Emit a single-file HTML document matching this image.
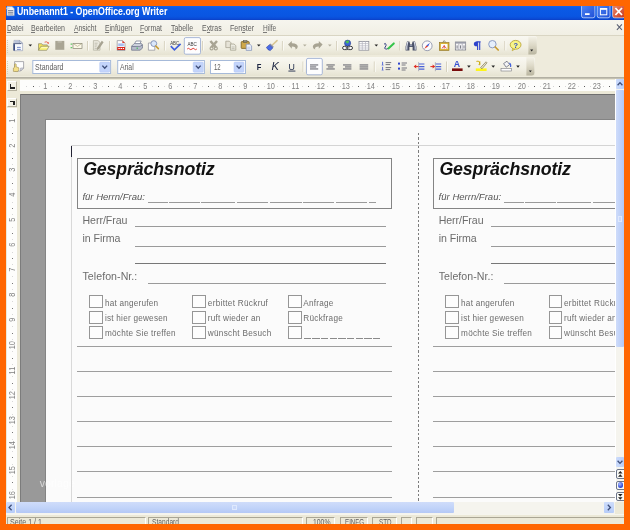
<!DOCTYPE html>
<html lang="de"><head><meta charset="utf-8"><title>Unbenannt1 - OpenOffice.org Writer</title><style>
html,body{margin:0;padding:0;}
body{width:630px;height:530px;background:#ff6600;position:relative;overflow:hidden;font-family:"Liberation Sans",sans-serif;}
div,span.t,svg{position:absolute;}
span.t{white-space:pre;line-height:1;}
span.t u{text-decoration-thickness:0.7px;text-underline-offset:0.6px;}
#win{left:6px;top:6px;width:618px;height:518px;background:#ece9d8;overflow:hidden;}
.L{left:0;top:0;width:630px;height:530px;}
</style></head><body>
<div class="L" style="will-change:transform;"><div style="left:6px;top:6px;width:618px;height:14px;background:linear-gradient(#1563ea 0%,#0a5ae6 14%,#0956e2 72%,#0a4dd8 88%,#0b3fc6 100%);"></div><span class="t" style="left:17.00px;top:6.87px;font-size:10.20px;color:#fff;font-weight:bold;transform-origin:0 0;transform:scaleX(0.8631);">Unbenannt1 - OpenOffice.org Writer</span><div style="left:6px;top:20px;width:618px;height:15px;background:linear-gradient(#f6f5ee,#f1efe4);"></div><div style="left:6px;top:35px;width:618px;height:1px;background:#d9d5c3;"></div><span class="t" style="left:6.50px;top:23.87px;font-size:8.30px;color:#5e5e5e;transform-origin:0 0;transform:scaleX(0.8516);">Datei</span><span class="t" style="left:31.00px;top:23.87px;font-size:8.30px;color:#5e5e5e;transform-origin:0 0;transform:scaleX(0.8471);">Bearbeiten</span><span class="t" style="left:73.60px;top:23.87px;font-size:8.30px;color:#5e5e5e;transform-origin:0 0;transform:scaleX(0.8230);">Ansicht</span><span class="t" style="left:104.80px;top:23.87px;font-size:8.30px;color:#5e5e5e;transform-origin:0 0;transform:scaleX(0.8301);">Einfügen</span><span class="t" style="left:140.00px;top:23.87px;font-size:8.30px;color:#5e5e5e;transform-origin:0 0;transform:scaleX(0.8371);">Format</span><span class="t" style="left:171.00px;top:23.87px;font-size:8.30px;color:#5e5e5e;transform-origin:0 0;transform:scaleX(0.8366);">Tabelle</span><span class="t" style="left:202.00px;top:23.87px;font-size:8.30px;color:#5e5e5e;transform-origin:0 0;transform:scaleX(0.8377);">Extras</span><span class="t" style="left:229.80px;top:23.87px;font-size:8.30px;color:#5e5e5e;transform-origin:0 0;transform:scaleX(0.8600);">Fenster</span><span class="t" style="left:262.80px;top:23.87px;font-size:8.30px;color:#5e5e5e;transform-origin:0 0;transform:scaleX(0.7947);">Hilfe</span><div style="left:6px;top:36px;width:618px;height:42px;background:#eeebdc;"></div><div style="left:6px;top:36px;width:531px;height:18.5px;background:linear-gradient(#f9f8f2,#f1efe3 60%,#e6e3d2);border-radius:0 2.5px 2.5px 0;"></div><div style="left:6px;top:56.5px;width:528.5px;height:19px;background:linear-gradient(#f9f8f2,#f1efe3 60%,#e6e3d2);border-radius:0 2.5px 2.5px 0;"></div><div style="left:6px;top:76.5px;width:618px;height:1.5px;background:linear-gradient(#cfccbc,#96948a);"></div><div style="left:6px;top:78px;width:618px;height:1px;background:#c4c1b2;"></div><div style="left:6.50px;top:32.00px;width:4.81px;height:1px;background:#5e5e5e;opacity:.8"></div><div style="left:31.00px;top:32.00px;width:4.40px;height:1px;background:#5e5e5e;opacity:.8"></div><div style="left:73.59px;top:32.00px;width:4.27px;height:1px;background:#5e5e5e;opacity:.8"></div><div style="left:104.80px;top:32.00px;width:4.30px;height:1px;background:#5e5e5e;opacity:.8"></div><div style="left:140.00px;top:32.00px;width:3.95px;height:1px;background:#5e5e5e;opacity:.8"></div><div style="left:171.00px;top:32.00px;width:3.18px;height:1px;background:#5e5e5e;opacity:.8"></div><div style="left:206.63px;top:32.00px;width:3.18px;height:1px;background:#5e5e5e;opacity:.8"></div><div style="left:242.08px;top:32.00px;width:3.29px;height:1px;background:#5e5e5e;opacity:.8"></div><div style="left:262.80px;top:32.00px;width:4.47px;height:1px;background:#5e5e5e;opacity:.8"></div><svg class="L" style="left:0;top:0" width="630" height="530" viewBox="0 0 630 530"><rect x="7" y="40" width="1" height="1" fill="#d2cebc"/><rect x="7" y="42" width="1" height="1" fill="#d2cebc"/><rect x="7" y="44" width="1" height="1" fill="#d2cebc"/><rect x="7" y="46" width="1" height="1" fill="#d2cebc"/><rect x="7" y="48" width="1" height="1" fill="#d2cebc"/><rect x="7" y="50" width="1" height="1" fill="#d2cebc"/><rect x="7" y="52" width="1" height="1" fill="#d2cebc"/><rect x="7" y="61" width="1" height="1" fill="#d2cebc"/><rect x="7" y="63" width="1" height="1" fill="#d2cebc"/><rect x="7" y="65" width="1" height="1" fill="#d2cebc"/><rect x="7" y="67" width="1" height="1" fill="#d2cebc"/><rect x="7" y="69" width="1" height="1" fill="#d2cebc"/><rect x="7" y="71" width="1" height="1" fill="#d2cebc"/><rect x="7" y="73" width="1" height="1" fill="#d2cebc"/><path d="M14 40.4 h5.4 l3.2 2.8 v7.5 h-8.6z" fill="#f7f9fd" stroke="#8f98b3" stroke-width="0.6"/><path d="M14.3 40.7 h5 l2.6 2.4 h-7.6z" fill="#b9c2d8"/><path d="M19.4 40.4 v2.8 h3.2z" fill="#dfe4ef" stroke="#7f89a6" stroke-width="0.5"/><rect x="13.3" y="43.1" width="8" height="1" fill="#5b6788"/><rect x="13.3" y="44.1" width="1.7" height="6.5" fill="#3d4d80"/><path d="M17 47.4h3.8M17 49.4h3.8" stroke="#6b82c4" stroke-width="0.9"/><path d="M28.5 44.4 h3.6 l-1.8 2.2z" fill="#222"/><path d="M38.5 50.3 v-6.6 h3.2 l1 1.2 h4.6 v1.4" fill="#f2e45e" stroke="#7d7a5c" stroke-width="0.6"/><path d="M38.5 50.3 l2.4 -4 h8.2 l-2.4 4z" fill="#fbf47e" stroke="#7d7a5c" stroke-width="0.6"/><path d="M41.4 47.4 h6.4" stroke="#fffde0" stroke-width="0.7"/><path d="M44.6 42.2 q2 -1 3.4 0.5" fill="none" stroke="#e8452e" stroke-width="0.8"/><path d="M47.2 43.5 l1.8 0.2 l-0.3 -1.8z" fill="#e8452e"/><rect x="55.3" y="40.9" width="9" height="8.9" fill="#a9a594"/><rect x="57.6" y="41.4" width="4.2" height="1" fill="#c9c6b8"/><rect x="73" y="43.3" width="9" height="5.3" fill="#fcf9e8" stroke="#74715f" stroke-width="0.6"/><path d="M73.3 43.6 l4.2 2.8 l4.2 -2.8" fill="none" stroke="#a59f78" stroke-width="0.6"/><rect x="70.6" y="43.6" width="1.6" height="1" fill="#3fc24a"/><rect x="70.6" y="47.2" width="1.6" height="1" fill="#3fc24a"/><rect x="87" y="41" width="1" height="9.5" fill="#d6d1be"/><rect x="88" y="41" width="1" height="9.5" fill="#fbfaf5"/><path d="M93.4 40.6 h4.6 l2 1.8 v7.8 h-6.6z" fill="#eae8de" stroke="#b3b0a0" stroke-width="0.7"/><path d="M94.6 43.2h3M94.6 45h2.6M94.6 46.8h2M94.6 48.6h3.4" stroke="#b3b0a0" stroke-width="0.7"/><path d="M103.6 42.2 l-1.8 -1.4 l-4.6 6.6 l-0.4 2.8 l2.4 -1.4z" fill="#a7a392"/><rect x="109" y="41" width="1" height="9.5" fill="#d6d1be"/><rect x="110" y="41" width="1" height="9.5" fill="#fbfaf5"/><path d="M117.2 40.6 h5.2 l2.6 2.5 v7.4 h-7.8z" fill="#fdfdfd" stroke="#8d8d94" stroke-width="0.7"/><path d="M122.4 40.6 l2.6 2.5 h-2.6z" fill="#e23a2a"/><rect x="118.2" y="43.4" width="5.6" height="2.8" fill="#a9bcee"/><rect x="117.2" y="47" width="7.8" height="3" fill="#d8281f"/><path d="M118.4 48.5h1.4M120.6 48.5h1.4M122.8 48.5h1.2" stroke="#fff" stroke-width="1.1"/><path d="M134.4 44 l1.6 -3 h5.2 l-1.4 3z" fill="#fff" stroke="#6a7188" stroke-width="0.7"/><path d="M131.6 46.2 l2.6 -2.6 h7.4 l0.8 1.6 l-2.6 2.4z" fill="#d3d7e2" stroke="#70778e" stroke-width="0.7"/><path d="M131.6 46.4 h8.4 l2.4 -1.6 v3.4 l-2.4 2 h-8.4z" fill="#b7bccc" stroke="#666d84" stroke-width="0.7"/><rect x="136.6" y="47.6" width="1.2" height="1.2" fill="#2fbf45"/><path d="M148.4 43 h4.2 l2.2 2 v5.2 h-6.4z" fill="#fdfdfd" stroke="#8d8d94" stroke-width="0.7"/><circle cx="153.8" cy="43.6" r="2.9" fill="#dbe8fb" stroke="#7d8db5" stroke-width="0.9"/><path d="M155.8 46 l2.6 2.6" stroke="#c89a2e" stroke-width="1.5" stroke-linecap="round"/><rect x="163.9" y="41" width="1" height="9.5" fill="#d6d1be"/><rect x="164.9" y="41" width="1" height="9.5" fill="#fbfaf5"/><text x="170.2" y="44.6" font-size="4.8" fill="#3a3a3a" font-family="Liberation Sans, sans-serif" textLength="9" lengthAdjust="spacingAndGlyphs">ABC</text><path d="M170.8 46.2 l3.6 3.6 l6.2 -6" fill="none" stroke="#4060dc" stroke-width="1.7"/><rect x="184.3" y="37.6" width="16.2" height="16.6" rx="1.5" fill="#fdfdfe" stroke="#9fb0d4" stroke-width="0.9"/><text x="187.4" y="46.4" font-size="4.8" fill="#3a3a3a" font-family="Liberation Sans, sans-serif" textLength="9.4" lengthAdjust="spacingAndGlyphs">ABC</text><path d="M187.2 49 q1.2 -1.4 2.4 0 t2.4 0 t2.4 0 t2.4 0" fill="none" stroke="#e02a20" stroke-width="0.9"/><rect x="202.1" y="41" width="1" height="9.5" fill="#d6d1be"/><rect x="203.1" y="41" width="1" height="9.5" fill="#fbfaf5"/><path d="M210.4 41 l5.6 6.4 M217 41 l-5.6 6.4" stroke="#a8a493" stroke-width="2.5"/><circle cx="211.6" cy="48.4" r="1.5" fill="none" stroke="#a8a493" stroke-width="1.2"/><circle cx="215.8" cy="48.4" r="1.5" fill="none" stroke="#a8a493" stroke-width="1.2"/><path d="M225.8 41.2 h3.6 l1.6 1.6 v4.8 h-5.2z" fill="#e6e3d7" stroke="#a8a493" stroke-width="0.8"/><path d="M230.4 44 h3.6 l1.8 1.6 v4.6 h-5.4z" fill="#ecebe2" stroke="#a8a493" stroke-width="0.8"/><path d="M231.6 47h3M231.6 48.6h3" stroke="#a8a493" stroke-width="0.6"/><rect x="241.2" y="41.6" width="8" height="6.8" rx="0.6" fill="#cfa84a" stroke="#7a5f22" stroke-width="0.8"/><rect x="243.4" y="40.6" width="3.6" height="1.8" fill="#8f8a7a" stroke="#55513f" stroke-width="0.5"/><path d="M246.2 44.2 h3.6 l1.8 1.6 v4.6 h-5.4z" fill="#eef2fb" stroke="#7d8db5" stroke-width="0.7"/><path d="M247.2 47.2h3.2M247.2 48.8h3.2" stroke="#9fb0d8" stroke-width="0.6"/><path d="M257 44.4 h3.6 l-1.8 2.2z" fill="#222"/><path d="M272.4 45 l4.6 -4.4" stroke="#d9c692" stroke-width="1.6" stroke-linecap="round"/><path d="M270.4 43.6 l3.4 3.2 l-1 1.2 l-3.4 -3.2z" fill="#8a8fa6"/><path d="M269.4 44.8 l3.4 3.2 l-2.6 2.6 q-2.6 -0.6 -3.8 -3.2z" fill="#4a6ce6" stroke="#2c3fa6" stroke-width="0.6"/><rect x="281.9" y="41" width="1" height="9.5" fill="#d6d1be"/><rect x="282.9" y="41" width="1" height="9.5" fill="#fbfaf5"/><path d="M288 44.4 l3.8 -3.4 v2.2 q5.6 -0.2 6 3.6 q-0.2 2 -2.4 2.8 q1 -3 -3.6 -3 v2.2z" fill="#a8a493"/><path d="M303 44.4 h3.6 l-1.8 2.2z" fill="#b3af9e"/><path d="M322.6 44.4 l-3.8 -3.4 v2.2 q-5.6 -0.2 -6 3.6 q0.2 2 2.4 2.8 q-1 -3 3.6 -3 v2.2z" fill="#a8a493"/><path d="M328 44.4 h3.6 l-1.8 2.2z" fill="#b3af9e"/><rect x="336.1" y="41" width="1" height="9.5" fill="#d6d1be"/><rect x="337.1" y="41" width="1" height="9.5" fill="#fbfaf5"/><circle cx="347.6" cy="43.2" r="3.1" fill="#3b62d6" stroke="#27387f" stroke-width="0.5"/><path d="M345.4 41.6 q1.6 -1.8 3.6 -0.8 q0.6 1.8 -1.2 2.6 q-2 0.2 -2.4 -1.8z" fill="#4cc054"/><rect x="342.6" y="46.3" width="5.6" height="3.3" rx="1.65" fill="#fff" stroke="#26262c" stroke-width="0.9"/><rect x="346.9" y="46.3" width="5.6" height="3.3" rx="1.65" fill="#fff" stroke="#26262c" stroke-width="0.9"/><path d="M345.6 47.95h4" stroke="#26262c" stroke-width="0.8"/><rect x="359" y="41.4" width="9.8" height="8.8" fill="#fdfdfd" stroke="#8e8f9a" stroke-width="0.8"/><path d="M362.3 41.4v8.8M365.5 41.4v8.8M359 43.6h9.8M359 45.8h9.8M359 48h9.8" stroke="#b4b5bf" stroke-width="0.7"/><path d="M374.5 44.4 h3.6 l-1.8 2.2z" fill="#222"/><path d="M384 44.2 q1.4 -1.4 2 0 q0.4 1.6 -0.8 2.8 q-1.2 1.2 0.2 2 q1.6 0.4 2.6 -0.6" fill="none" stroke="#23307a" stroke-width="0.9"/><path d="M388.4 48.4 l5.4 -5" stroke="#35c44a" stroke-width="2" stroke-linecap="round"/><rect x="399.3" y="41" width="1" height="9.5" fill="#d6d1be"/><rect x="400.3" y="41" width="1" height="9.5" fill="#fbfaf5"/><path d="M405.6 50.4 v-4 l1.4 -5 h2.4 l0.8 3 h1.6 l0.8 -3 h2.4 l1.4 5 v4 h-3.8 v-3.4 h-3.2 v3.4z" fill="#4a5168"/><path d="M407.7 42 l-0.9 4.4 v3.4 M414.3 42 l0.9 4.4 v3.4" fill="none" stroke="#d6dbe8" stroke-width="1.2"/><path d="M409.8 45.4 h2.4" stroke="#8e95ab" stroke-width="1.4"/><circle cx="427.2" cy="45.8" r="4.9" fill="#fbfbfd" stroke="#8f95aa" stroke-width="0.9"/><path d="M430 42.8 l-2 3.8 l-1.6 -1.2z" fill="#3a5ad8"/><path d="M424.2 49 l2.2 -3.6 l1.6 1.2z" fill="#e03a2a"/><path d="M442.6 42.4 l1.6 -1.8 l1.6 1.8" fill="none" stroke="#6b6440" stroke-width="0.7"/><rect x="439.4" y="42.6" width="9.6" height="7.8" fill="#d9b53a" stroke="#8a6d1a" stroke-width="0.6"/><rect x="440.9" y="44" width="6.6" height="5" fill="#fdfdfd"/><path d="M442 48.6 q2.2 -4.6 4.4 0 M444.2 45 v3.6" fill="none" stroke="#d83a2a" stroke-width="0.8"/><rect x="455.3" y="42" width="10.4" height="8" fill="#f7f7f9" stroke="#70727e" stroke-width="0.7"/><rect x="455.3" y="42" width="10.4" height="1.6" fill="#9a9ca8"/><path d="M458.8 43.6v6.4M462.2 43.6v6.4" stroke="#8e8f9a" stroke-width="0.6"/><path d="M457.1 45.4v3.2M460.5 45.4v3.2M464 45.4v3.2" stroke="#5c5e6a" stroke-width="0.8"/><path d="M480.6 41.9 h-4 M477.6 41.9 v8.2 M479.7 41.9 v8.2" fill="none" stroke="#2f44cc" stroke-width="1.1"/><path d="M477.4 41.5 h-0.8 q-2.8 0.2 -2.8 2.4 q0 2.2 2.8 2.4 h0.8z" fill="#2f44cc"/><circle cx="492.4" cy="44.2" r="3.7" fill="#e6effc" stroke="#8c9cc4" stroke-width="1"/><path d="M495.2 47 l3 3" stroke="#c89a2e" stroke-width="1.7" stroke-linecap="round"/><rect x="504.3" y="41" width="1" height="9.5" fill="#d6d1be"/><rect x="505.3" y="41" width="1" height="9.5" fill="#fbfaf5"/><path d="M512.6 48.4 l-0.4 2.4 l2.6 -1.6z" fill="#f5f07a" stroke="#b49a2a" stroke-width="0.6"/><ellipse cx="515.6" cy="44.8" rx="5.4" ry="4.4" fill="#f8f488" stroke="#b49a2a" stroke-width="0.8"/><text x="513.6" y="47.6" font-size="7.4" font-weight="bold" fill="#2d49c8" font-family="Liberation Sans, sans-serif">?</text><defs><linearGradient id="eh" x1="0" y1="0" x2="0" y2="1"><stop offset="0" stop-color="#f4f2e8"/><stop offset="0.5" stop-color="#dcd8c6"/><stop offset="1" stop-color="#b9b5a0"/></linearGradient></defs><path d="M528.4 36.4 h6 q2.4 0 2.4 2.4 v13.2 q0 2.4 -2.4 2.4 h-6z" fill="url(#eh)"/><path d="M526.4 57 h5.6 q2.4 0 2.4 2.4 v13.6 q0 2.4 -2.4 2.4 h-5.6z" fill="url(#eh)"/><path d="M530.2 49.6 h3 l-1.5 1.8z" fill="#222"/><path d="M528.8 70.4 h3 l-1.5 1.8z" fill="#222"/><path d="M14.6 61.6 h9 v6.4 l-3 3 h-6z" fill="#fdfdfd" stroke="#8d8d94" stroke-width="0.7"/><path d="M23.6 68 h-3 v3z" fill="#d7dbe8" stroke="#8d8d94" stroke-width="0.5"/><path d="M13.4 71.4 v-3.4 l1.2 -0.8 v-3 q0.9 -0.8 1.6 0 v2.6 l2.6 1 v2 l-1 1.8z" fill="#f4e08a" stroke="#8f7a3a" stroke-width="0.5"/><rect x="32.8" y="60.5" width="77.8" height="13" fill="#fff" stroke="#a6bad9" stroke-width="1"/><rect x="99.7" y="62" width="10.1" height="10.2" rx="1" fill="#c3d4fb" stroke="#b3c6f3" stroke-width="0.5"/><path d="M102.35 65.6 l2.4 2.6 l2.4 -2.6" fill="none" stroke="#3d4d78" stroke-width="1.4"/><rect x="117.7" y="60.5" width="86.7" height="13" fill="#fff" stroke="#a6bad9" stroke-width="1"/><rect x="193.2" y="62" width="10.1" height="10.2" rx="1" fill="#c3d4fb" stroke="#b3c6f3" stroke-width="0.5"/><path d="M195.85 65.6 l2.4 2.6 l2.4 -2.6" fill="none" stroke="#3d4d78" stroke-width="1.4"/><rect x="210.5" y="60.5" width="35" height="13" fill="#fff" stroke="#a6bad9" stroke-width="1"/><rect x="234" y="62" width="10" height="10.2" rx="1" fill="#c3d4fb" stroke="#b3c6f3" stroke-width="0.5"/><path d="M236.6 65.6 l2.4 2.6 l2.4 -2.6" fill="none" stroke="#3d4d78" stroke-width="1.4"/><text x="256.8" y="69.8" font-size="9.4" font-weight="bold" fill="#1a2340" font-family="Liberation Sans, sans-serif" textLength="4.6" lengthAdjust="spacingAndGlyphs">F</text><text x="271.4" y="70" font-size="10.4" font-style="italic" fill="#1a2340" font-family="Liberation Sans, sans-serif" textLength="7.4" lengthAdjust="spacingAndGlyphs">K</text><text x="288.6" y="69.6" font-size="8.8" fill="#1e2a4a" font-family="Liberation Sans, sans-serif">U</text><rect x="288.4" y="70.6" width="7" height="0.9" fill="#1e2a4a"/><rect x="302.5" y="61.5" width="1" height="10.5" fill="#d6d1be"/><rect x="303.5" y="61.5" width="1" height="10.5" fill="#fbfaf5"/><rect x="306.5" y="58.4" width="15.8" height="16.4" rx="1.5" fill="#fdfdfe" stroke="#9fb0d4" stroke-width="0.9"/><rect x="310" y="64.4" width="8.2" height="1.1" fill="#6b6b72"/><rect x="310" y="66.4" width="6.2" height="1.1" fill="#6b6b72"/><rect x="310" y="68.4" width="8.2" height="1.1" fill="#6b6b72"/><rect x="326.4" y="64.4" width="8.4" height="1.1" fill="#6b6b72"/><rect x="327.9" y="66.4" width="5.4" height="1.1" fill="#6b6b72"/><rect x="326.4" y="68.4" width="8.4" height="1.1" fill="#6b6b72"/><rect x="343" y="64.4" width="8.4" height="1.1" fill="#6b6b72"/><rect x="345" y="66.4" width="6.4" height="1.1" fill="#6b6b72"/><rect x="343" y="68.4" width="8.4" height="1.1" fill="#6b6b72"/><rect x="359.6" y="64.4" width="8.6" height="1.1" fill="#6b6b72"/><rect x="359.6" y="66.4" width="8.6" height="1.1" fill="#6b6b72"/><rect x="359.6" y="68.4" width="8.6" height="1.1" fill="#6b6b72"/><rect x="373.8" y="61.5" width="1" height="10.5" fill="#d6d1be"/><rect x="374.8" y="61.5" width="1" height="10.5" fill="#fbfaf5"/><path d="M382.6 61.8v3.2M382.6 66.8v3.2" stroke="#4a5fd6" stroke-width="0.9"/><path d="M381.6 65.2h2M381.6 70.2h2" stroke="#4a5fd6" stroke-width="0.6"/><path d="M385.6 62.6h5.6M385.6 64.6h4.6M385.6 67.6h5.6M385.6 69.6h4.6" stroke="#77777e" stroke-width="1"/><rect x="398" y="62.6" width="2" height="2" fill="#2f44cc"/><rect x="398" y="67.6" width="2" height="2" fill="#2f44cc"/><path d="M401.6 63h5.4M401.6 65h4M401.6 68h5.4M401.6 70h4" stroke="#77777e" stroke-width="1"/><path d="M418.6 62.2v9" stroke="#999aa6" stroke-width="0.7"/><path d="M419 64h5.4M419 66.6h5.4M419 69.2h5.4" stroke="#4a62d8" stroke-width="1.2"/><path d="M435.4 62.2v9" stroke="#999aa6" stroke-width="0.7"/><path d="M435.8 64h5.4M435.8 66.6h5.4M435.8 69.2h5.4" stroke="#4a62d8" stroke-width="1.2"/><path d="M413.6 66.6 l2.6 -2 v4z" fill="#e02a20"/><path d="M415.6 66.6h3" stroke="#e02a20" stroke-width="1"/><path d="M435.2 66.6 l-2.6 -2 v4z" fill="#e02a20"/><path d="M430.4 66.6h3" stroke="#e02a20" stroke-width="1"/><rect x="446" y="61.5" width="1" height="10.5" fill="#d6d1be"/><rect x="447" y="61.5" width="1" height="10.5" fill="#fbfaf5"/><text x="453.8" y="67" font-size="8.8" font-weight="bold" fill="#3a52d0" font-family="Liberation Sans, sans-serif">A</text><rect x="452" y="68.4" width="10.6" height="2.6" fill="#7a0c0c"/><path d="M467.1 65.6 h3.6 l-1.8 2.2z" fill="#222"/><rect x="475.8" y="68.4" width="10.8" height="2.6" fill="#fdf51a"/><path d="M480.6 67.6 l5.4 -5.8 l1 1 l-5 6z" fill="#e9e3c8" stroke="#6b6440" stroke-width="0.6"/><path d="M476.4 61.4 q2 -0.8 3 0.6 q0.8 1.8 -0.6 3 M479.8 61.2 v4" fill="none" stroke="#c8a400" stroke-width="0.9"/><path d="M491.4 65.6 h3.6 l-1.8 2.2z" fill="#222"/><rect x="501" y="68.4" width="10.4" height="2.6" fill="#fdfdfd" stroke="#77777e" stroke-width="0.6"/><path d="M503.6 63.6 l3.4 -2.4 l2.6 3.4 l-3.4 2.6z" fill="#f4f4f6" stroke="#55596b" stroke-width="0.7"/><path d="M509.4 63 q1.8 0.8 1.2 4" fill="none" stroke="#3a5ad8" stroke-width="1.1"/><path d="M516.2 65.6 h3.6 l-1.8 2.2z" fill="#222"/></svg><span class="t" style="left:35.00px;top:62.69px;font-size:8.40px;color:#5e5e5e;transform-origin:0 0;transform:scaleX(0.8382);">Standard</span><span class="t" style="left:119.50px;top:62.69px;font-size:8.40px;color:#5e5e5e;transform-origin:0 0;transform:scaleX(0.8171);">Arial</span><span class="t" style="left:213.80px;top:62.69px;font-size:8.40px;color:#5e5e5e;transform-origin:0 0;transform:scaleX(0.7183);">12</span><svg class="L" style="left:0;top:0" width="630" height="530" viewBox="0 0 630 530"><defs><linearGradient id="cb" x1="0" y1="0" x2="1" y2="1"><stop offset="0" stop-color="#4f86f4"/><stop offset="1" stop-color="#1f4fd6"/></linearGradient><linearGradient id="cr" x1="0" y1="0" x2="1" y2="1"><stop offset="0" stop-color="#ec8a6c"/><stop offset="1" stop-color="#c8371c"/></linearGradient></defs><rect x="581.5" y="4.4" width="13.4" height="13.4" rx="2" fill="url(#cb)" stroke="#dfe8fc" stroke-width="0.7"/><rect x="597.2" y="4.4" width="12.8" height="13.4" rx="2" fill="url(#cb)" stroke="#dfe8fc" stroke-width="0.7"/><rect x="612.6" y="4.4" width="12.4" height="13.4" rx="2" fill="url(#cr)" stroke="#f3dcd2" stroke-width="0.7"/><rect x="585" y="13.2" width="4.6" height="1.8" fill="#fff"/><rect x="600.4" y="8.6" width="6.4" height="6.2" fill="none" stroke="#fff" stroke-width="1"/><rect x="600.4" y="8.4" width="6.4" height="1.4" fill="#fff"/><path d="M615.4 8 l6.6 7 M622 8 l-6.6 7" stroke="#fff" stroke-width="1.8"/><path d="M616.9 24.4 l5 5.4 M621.9 24.4 l-5 5.4" stroke="#5a5f73" stroke-width="1.05"/><path d="M7 6.6 h5 l2.2 2 v7 h-7.2z" fill="#f2f3f5" stroke="#aab0bd" stroke-width="0.6"/><rect x="6.4" y="7.6" width="3.2" height="1.6" fill="#d5d9e2"/><path d="M8 10.6h5.2M8 12.3h5.2M8 14h5.2" stroke="#66728e" stroke-width="0.9"/></svg><div style="left:6px;top:79px;width:618px;height:15px;background:#ece9d8;"></div><div style="left:20px;top:80px;width:595px;height:11px;background:#fdfdfb;"></div><div style="left:7px;top:81px;width:10px;height:10px;background:#f3f1e6;border:1px solid #fff;border-right-color:#b5b19f;border-bottom-color:#b5b19f;box-sizing:border-box;"></div><div style="left:9.5px;top:84px;width:1.5px;height:4.5px;background:#222;"></div><div style="left:9.5px;top:87px;width:5px;height:1.5px;background:#222;"></div><span class="t" style="left:42.76px;top:82.12px;font-size:8.60px;color:#808080;transform:scaleX(.86);transform-origin:50% 50%;">1</span><span class="t" style="left:67.82px;top:82.12px;font-size:8.60px;color:#808080;transform:scaleX(.86);transform-origin:50% 50%;">2</span><span class="t" style="left:92.88px;top:82.12px;font-size:8.60px;color:#808080;transform:scaleX(.86);transform-origin:50% 50%;">3</span><span class="t" style="left:117.94px;top:82.12px;font-size:8.60px;color:#808080;transform:scaleX(.86);transform-origin:50% 50%;">4</span><span class="t" style="left:143.00px;top:82.12px;font-size:8.60px;color:#808080;transform:scaleX(.86);transform-origin:50% 50%;">5</span><span class="t" style="left:168.06px;top:82.12px;font-size:8.60px;color:#808080;transform:scaleX(.86);transform-origin:50% 50%;">6</span><span class="t" style="left:193.12px;top:82.12px;font-size:8.60px;color:#808080;transform:scaleX(.86);transform-origin:50% 50%;">7</span><span class="t" style="left:218.18px;top:82.12px;font-size:8.60px;color:#808080;transform:scaleX(.86);transform-origin:50% 50%;">8</span><span class="t" style="left:243.24px;top:82.12px;font-size:8.60px;color:#808080;transform:scaleX(.86);transform-origin:50% 50%;">9</span><span class="t" style="left:265.90px;top:82.12px;font-size:8.60px;color:#808080;transform:scaleX(.86);transform-origin:50% 50%;">10</span><span class="t" style="left:290.96px;top:82.12px;font-size:8.60px;color:#808080;transform:scaleX(.86);transform-origin:50% 50%;">11</span><span class="t" style="left:316.02px;top:82.12px;font-size:8.60px;color:#808080;transform:scaleX(.86);transform-origin:50% 50%;">12</span><span class="t" style="left:341.08px;top:82.12px;font-size:8.60px;color:#808080;transform:scaleX(.86);transform-origin:50% 50%;">13</span><span class="t" style="left:366.14px;top:82.12px;font-size:8.60px;color:#808080;transform:scaleX(.86);transform-origin:50% 50%;">14</span><span class="t" style="left:391.20px;top:82.12px;font-size:8.60px;color:#808080;transform:scaleX(.86);transform-origin:50% 50%;">15</span><span class="t" style="left:416.26px;top:82.12px;font-size:8.60px;color:#808080;transform:scaleX(.86);transform-origin:50% 50%;">16</span><span class="t" style="left:441.32px;top:82.12px;font-size:8.60px;color:#808080;transform:scaleX(.86);transform-origin:50% 50%;">17</span><span class="t" style="left:466.38px;top:82.12px;font-size:8.60px;color:#808080;transform:scaleX(.86);transform-origin:50% 50%;">18</span><span class="t" style="left:491.44px;top:82.12px;font-size:8.60px;color:#808080;transform:scaleX(.86);transform-origin:50% 50%;">19</span><span class="t" style="left:516.50px;top:82.12px;font-size:8.60px;color:#808080;transform:scaleX(.86);transform-origin:50% 50%;">20</span><span class="t" style="left:541.56px;top:82.12px;font-size:8.60px;color:#808080;transform:scaleX(.86);transform-origin:50% 50%;">21</span><span class="t" style="left:566.62px;top:82.12px;font-size:8.60px;color:#808080;transform:scaleX(.86);transform-origin:50% 50%;">22</span><span class="t" style="left:591.68px;top:82.12px;font-size:8.60px;color:#808080;transform:scaleX(.86);transform-origin:50% 50%;">23</span><div style="left:25.5px;top:85.5px;width:1px;height:1px;background:#d4d4d4;"></div><div style="left:32.5px;top:85.5px;width:1px;height:1px;background:#5a5a5a;"></div><div style="left:38.5px;top:85.5px;width:1px;height:1px;background:#d4d4d4;"></div><div style="left:50.5px;top:85.5px;width:1px;height:1px;background:#d4d4d4;"></div><div style="left:57.5px;top:85.5px;width:1px;height:1px;background:#5a5a5a;"></div><div style="left:63.5px;top:85.5px;width:1px;height:1px;background:#d4d4d4;"></div><div style="left:75.5px;top:85.5px;width:1px;height:1px;background:#d4d4d4;"></div><div style="left:82.5px;top:85.5px;width:1px;height:1px;background:#5a5a5a;"></div><div style="left:88.5px;top:85.5px;width:1px;height:1px;background:#d4d4d4;"></div><div style="left:101.5px;top:85.5px;width:1px;height:1px;background:#d4d4d4;"></div><div style="left:107.5px;top:85.5px;width:1px;height:1px;background:#5a5a5a;"></div><div style="left:113.5px;top:85.5px;width:1px;height:1px;background:#d4d4d4;"></div><div style="left:126.5px;top:85.5px;width:1px;height:1px;background:#d4d4d4;"></div><div style="left:132.5px;top:85.5px;width:1px;height:1px;background:#5a5a5a;"></div><div style="left:138.5px;top:85.5px;width:1px;height:1px;background:#d4d4d4;"></div><div style="left:151.5px;top:85.5px;width:1px;height:1px;background:#d4d4d4;"></div><div style="left:157.5px;top:85.5px;width:1px;height:1px;background:#5a5a5a;"></div><div style="left:163.5px;top:85.5px;width:1px;height:1px;background:#d4d4d4;"></div><div style="left:176.5px;top:85.5px;width:1px;height:1px;background:#d4d4d4;"></div><div style="left:182.5px;top:85.5px;width:1px;height:1px;background:#5a5a5a;"></div><div style="left:188.5px;top:85.5px;width:1px;height:1px;background:#d4d4d4;"></div><div style="left:201.5px;top:85.5px;width:1px;height:1px;background:#d4d4d4;"></div><div style="left:207.5px;top:85.5px;width:1px;height:1px;background:#5a5a5a;"></div><div style="left:213.5px;top:85.5px;width:1px;height:1px;background:#d4d4d4;"></div><div style="left:226.5px;top:85.5px;width:1px;height:1px;background:#d4d4d4;"></div><div style="left:232.5px;top:85.5px;width:1px;height:1px;background:#5a5a5a;"></div><div style="left:238.5px;top:85.5px;width:1px;height:1px;background:#d4d4d4;"></div><div style="left:251.5px;top:85.5px;width:1px;height:1px;background:#d4d4d4;"></div><div style="left:257.5px;top:85.5px;width:1px;height:1px;background:#5a5a5a;"></div><div style="left:263.5px;top:85.5px;width:1px;height:1px;background:#d4d4d4;"></div><div style="left:276.5px;top:85.5px;width:1px;height:1px;background:#d4d4d4;"></div><div style="left:282.5px;top:85.5px;width:1px;height:1px;background:#5a5a5a;"></div><div style="left:288.5px;top:85.5px;width:1px;height:1px;background:#d4d4d4;"></div><div style="left:301.5px;top:85.5px;width:1px;height:1px;background:#d4d4d4;"></div><div style="left:307.5px;top:85.5px;width:1px;height:1px;background:#5a5a5a;"></div><div style="left:314.5px;top:85.5px;width:1px;height:1px;background:#d4d4d4;"></div><div style="left:326.5px;top:85.5px;width:1px;height:1px;background:#d4d4d4;"></div><div style="left:332.5px;top:85.5px;width:1px;height:1px;background:#5a5a5a;"></div><div style="left:339.5px;top:85.5px;width:1px;height:1px;background:#d4d4d4;"></div><div style="left:351.5px;top:85.5px;width:1px;height:1px;background:#d4d4d4;"></div><div style="left:357.5px;top:85.5px;width:1px;height:1px;background:#5a5a5a;"></div><div style="left:364.5px;top:85.5px;width:1px;height:1px;background:#d4d4d4;"></div><div style="left:376.5px;top:85.5px;width:1px;height:1px;background:#d4d4d4;"></div><div style="left:382.5px;top:85.5px;width:1px;height:1px;background:#5a5a5a;"></div><div style="left:389.5px;top:85.5px;width:1px;height:1px;background:#d4d4d4;"></div><div style="left:401.5px;top:85.5px;width:1px;height:1px;background:#d4d4d4;"></div><div style="left:408.5px;top:85.5px;width:1px;height:1px;background:#5a5a5a;"></div><div style="left:414.5px;top:85.5px;width:1px;height:1px;background:#d4d4d4;"></div><div style="left:426.5px;top:85.5px;width:1px;height:1px;background:#d4d4d4;"></div><div style="left:433.5px;top:85.5px;width:1px;height:1px;background:#5a5a5a;"></div><div style="left:439.5px;top:85.5px;width:1px;height:1px;background:#d4d4d4;"></div><div style="left:451.5px;top:85.5px;width:1px;height:1px;background:#d4d4d4;"></div><div style="left:458.5px;top:85.5px;width:1px;height:1px;background:#5a5a5a;"></div><div style="left:464.5px;top:85.5px;width:1px;height:1px;background:#d4d4d4;"></div><div style="left:476.5px;top:85.5px;width:1px;height:1px;background:#d4d4d4;"></div><div style="left:483.5px;top:85.5px;width:1px;height:1px;background:#5a5a5a;"></div><div style="left:489.5px;top:85.5px;width:1px;height:1px;background:#d4d4d4;"></div><div style="left:502.5px;top:85.5px;width:1px;height:1px;background:#d4d4d4;"></div><div style="left:508.5px;top:85.5px;width:1px;height:1px;background:#5a5a5a;"></div><div style="left:514.5px;top:85.5px;width:1px;height:1px;background:#d4d4d4;"></div><div style="left:527.5px;top:85.5px;width:1px;height:1px;background:#d4d4d4;"></div><div style="left:533.5px;top:85.5px;width:1px;height:1px;background:#5a5a5a;"></div><div style="left:539.5px;top:85.5px;width:1px;height:1px;background:#d4d4d4;"></div><div style="left:552.5px;top:85.5px;width:1px;height:1px;background:#d4d4d4;"></div><div style="left:558.5px;top:85.5px;width:1px;height:1px;background:#5a5a5a;"></div><div style="left:564.5px;top:85.5px;width:1px;height:1px;background:#d4d4d4;"></div><div style="left:577.5px;top:85.5px;width:1px;height:1px;background:#d4d4d4;"></div><div style="left:583.5px;top:85.5px;width:1px;height:1px;background:#5a5a5a;"></div><div style="left:589.5px;top:85.5px;width:1px;height:1px;background:#d4d4d4;"></div><div style="left:602.5px;top:85.5px;width:1px;height:1px;background:#d4d4d4;"></div><div style="left:608.5px;top:85.5px;width:1px;height:1px;background:#5a5a5a;"></div><div style="left:6px;top:94px;width:14px;height:408px;background:#ece9d8;"></div><div style="left:7px;top:108px;width:10px;height:394px;background:#fdfdfb;"></div><div style="left:7px;top:98px;width:10px;height:9px;background:#f3f1e6;border:1px solid #fff;border-right-color:#b5b19f;border-bottom-color:#b5b19f;box-sizing:border-box;"></div><div style="left:10px;top:100.5px;width:4.5px;height:1.5px;background:#222;"></div><div style="left:13px;top:100.5px;width:1.5px;height:4.5px;background:#222;"></div><div style="left:12px;top:120.55px;width:0;height:0;transform:rotate(-90deg);"><span class="t" style="left:-2.40px;top:-4.28px;font-size:8.60px;color:#808080;transform:scaleX(.86);transform-origin:50% 50%;">1</span></div><div style="left:12px;top:145.50px;width:0;height:0;transform:rotate(-90deg);"><span class="t" style="left:-2.40px;top:-4.28px;font-size:8.60px;color:#808080;transform:scaleX(.86);transform-origin:50% 50%;">2</span></div><div style="left:12px;top:170.45px;width:0;height:0;transform:rotate(-90deg);"><span class="t" style="left:-2.40px;top:-4.28px;font-size:8.60px;color:#808080;transform:scaleX(.86);transform-origin:50% 50%;">3</span></div><div style="left:12px;top:195.40px;width:0;height:0;transform:rotate(-90deg);"><span class="t" style="left:-2.40px;top:-4.28px;font-size:8.60px;color:#808080;transform:scaleX(.86);transform-origin:50% 50%;">4</span></div><div style="left:12px;top:220.35px;width:0;height:0;transform:rotate(-90deg);"><span class="t" style="left:-2.40px;top:-4.28px;font-size:8.60px;color:#808080;transform:scaleX(.86);transform-origin:50% 50%;">5</span></div><div style="left:12px;top:245.30px;width:0;height:0;transform:rotate(-90deg);"><span class="t" style="left:-2.40px;top:-4.28px;font-size:8.60px;color:#808080;transform:scaleX(.86);transform-origin:50% 50%;">6</span></div><div style="left:12px;top:270.25px;width:0;height:0;transform:rotate(-90deg);"><span class="t" style="left:-2.40px;top:-4.28px;font-size:8.60px;color:#808080;transform:scaleX(.86);transform-origin:50% 50%;">7</span></div><div style="left:12px;top:295.20px;width:0;height:0;transform:rotate(-90deg);"><span class="t" style="left:-2.40px;top:-4.28px;font-size:8.60px;color:#808080;transform:scaleX(.86);transform-origin:50% 50%;">8</span></div><div style="left:12px;top:320.15px;width:0;height:0;transform:rotate(-90deg);"><span class="t" style="left:-2.40px;top:-4.28px;font-size:8.60px;color:#808080;transform:scaleX(.86);transform-origin:50% 50%;">9</span></div><div style="left:12px;top:345.10px;width:0;height:0;transform:rotate(-90deg);"><span class="t" style="left:-4.80px;top:-4.28px;font-size:8.60px;color:#808080;transform:scaleX(.86);transform-origin:50% 50%;">10</span></div><div style="left:12px;top:370.05px;width:0;height:0;transform:rotate(-90deg);"><span class="t" style="left:-4.80px;top:-4.28px;font-size:8.60px;color:#808080;transform:scaleX(.86);transform-origin:50% 50%;">11</span></div><div style="left:12px;top:395.00px;width:0;height:0;transform:rotate(-90deg);"><span class="t" style="left:-4.80px;top:-4.28px;font-size:8.60px;color:#808080;transform:scaleX(.86);transform-origin:50% 50%;">12</span></div><div style="left:12px;top:419.95px;width:0;height:0;transform:rotate(-90deg);"><span class="t" style="left:-4.80px;top:-4.28px;font-size:8.60px;color:#808080;transform:scaleX(.86);transform-origin:50% 50%;">13</span></div><div style="left:12px;top:444.90px;width:0;height:0;transform:rotate(-90deg);"><span class="t" style="left:-4.80px;top:-4.28px;font-size:8.60px;color:#808080;transform:scaleX(.86);transform-origin:50% 50%;">14</span></div><div style="left:12px;top:469.85px;width:0;height:0;transform:rotate(-90deg);"><span class="t" style="left:-4.80px;top:-4.28px;font-size:8.60px;color:#808080;transform:scaleX(.86);transform-origin:50% 50%;">15</span></div><div style="left:12px;top:494.80px;width:0;height:0;transform:rotate(-90deg);"><span class="t" style="left:-4.80px;top:-4.28px;font-size:8.60px;color:#808080;transform:scaleX(.86);transform-origin:50% 50%;">16</span></div><div style="left:11.5px;top:113.5px;width:1px;height:1px;background:#d8d8d8;"></div><div style="left:11.5px;top:126.5px;width:1px;height:1px;background:#d8d8d8;"></div><div style="left:11.5px;top:132.5px;width:1px;height:1px;background:#777;"></div><div style="left:11.5px;top:138.5px;width:1px;height:1px;background:#d8d8d8;"></div><div style="left:11.5px;top:151.5px;width:1px;height:1px;background:#d8d8d8;"></div><div style="left:11.5px;top:157.5px;width:1px;height:1px;background:#777;"></div><div style="left:11.5px;top:163.5px;width:1px;height:1px;background:#d8d8d8;"></div><div style="left:11.5px;top:176.5px;width:1px;height:1px;background:#d8d8d8;"></div><div style="left:11.5px;top:182.5px;width:1px;height:1px;background:#777;"></div><div style="left:11.5px;top:188.5px;width:1px;height:1px;background:#d8d8d8;"></div><div style="left:11.5px;top:201.5px;width:1px;height:1px;background:#d8d8d8;"></div><div style="left:11.5px;top:207.5px;width:1px;height:1px;background:#777;"></div><div style="left:11.5px;top:213.5px;width:1px;height:1px;background:#d8d8d8;"></div><div style="left:11.5px;top:226.5px;width:1px;height:1px;background:#d8d8d8;"></div><div style="left:11.5px;top:232.5px;width:1px;height:1px;background:#777;"></div><div style="left:11.5px;top:238.5px;width:1px;height:1px;background:#d8d8d8;"></div><div style="left:11.5px;top:251.5px;width:1px;height:1px;background:#d8d8d8;"></div><div style="left:11.5px;top:257.5px;width:1px;height:1px;background:#777;"></div><div style="left:11.5px;top:263.5px;width:1px;height:1px;background:#d8d8d8;"></div><div style="left:11.5px;top:275.5px;width:1px;height:1px;background:#d8d8d8;"></div><div style="left:11.5px;top:282.5px;width:1px;height:1px;background:#777;"></div><div style="left:11.5px;top:288.5px;width:1px;height:1px;background:#d8d8d8;"></div><div style="left:11.5px;top:300.5px;width:1px;height:1px;background:#d8d8d8;"></div><div style="left:11.5px;top:307.5px;width:1px;height:1px;background:#777;"></div><div style="left:11.5px;top:313.5px;width:1px;height:1px;background:#d8d8d8;"></div><div style="left:11.5px;top:325.5px;width:1px;height:1px;background:#d8d8d8;"></div><div style="left:11.5px;top:332.5px;width:1px;height:1px;background:#777;"></div><div style="left:11.5px;top:338.5px;width:1px;height:1px;background:#d8d8d8;"></div><div style="left:11.5px;top:350.5px;width:1px;height:1px;background:#d8d8d8;"></div><div style="left:11.5px;top:357.5px;width:1px;height:1px;background:#777;"></div><div style="left:11.5px;top:363.5px;width:1px;height:1px;background:#d8d8d8;"></div><div style="left:11.5px;top:375.5px;width:1px;height:1px;background:#d8d8d8;"></div><div style="left:11.5px;top:382.5px;width:1px;height:1px;background:#777;"></div><div style="left:11.5px;top:388.5px;width:1px;height:1px;background:#d8d8d8;"></div><div style="left:11.5px;top:400.5px;width:1px;height:1px;background:#d8d8d8;"></div><div style="left:11.5px;top:406.5px;width:1px;height:1px;background:#777;"></div><div style="left:11.5px;top:413.5px;width:1px;height:1px;background:#d8d8d8;"></div><div style="left:11.5px;top:425.5px;width:1px;height:1px;background:#d8d8d8;"></div><div style="left:11.5px;top:431.5px;width:1px;height:1px;background:#777;"></div><div style="left:11.5px;top:438.5px;width:1px;height:1px;background:#d8d8d8;"></div><div style="left:11.5px;top:450.5px;width:1px;height:1px;background:#d8d8d8;"></div><div style="left:11.5px;top:456.5px;width:1px;height:1px;background:#777;"></div><div style="left:11.5px;top:463.5px;width:1px;height:1px;background:#d8d8d8;"></div><div style="left:11.5px;top:475.5px;width:1px;height:1px;background:#d8d8d8;"></div><div style="left:11.5px;top:481.5px;width:1px;height:1px;background:#777;"></div><div style="left:11.5px;top:488.5px;width:1px;height:1px;background:#d8d8d8;"></div><div class="L" style="clip-path:inset(94px 15px 28px 20px);"><div style="left:20px;top:94px;width:595px;height:408px;background:#999;"></div><div style="left:20px;top:94px;width:595px;height:1px;background:#6f6f6f;"></div><div style="left:20px;top:94px;width:1px;height:408px;background:#7c7c7c;"></div><div style="left:45px;top:119px;width:655px;height:383px;background:#fbfbfb;border-left:1px solid #848484;border-top:1px solid #848484;"></div><span class="t" style="left:39.70px;top:479.10px;font-size:10.40px;color:rgba(255,255,255,0.62);letter-spacing:0.152px;">vorlage</span><div style="left:71px;top:145px;width:629px;height:1px;background:#d4d4d4;"></div><div style="left:71px;top:145px;width:1px;height:357px;background:#d9d9d9;"></div><div style="left:71px;top:146px;width:1px;height:11px;background:#223;"></div><div style="left:418px;top:132.8px;width:1px;height:369.2px;background:repeating-linear-gradient(#7c7c7c 0 2.2px,transparent 2.2px 4.35px);"></div><div style="left:77px;top:158px;width:315px;height:50.5px;border:1px solid #848484;box-sizing:border-box;"></div><span class="t" style="left:83.20px;top:160.53px;font-size:17.80px;color:#111;font-weight:bold;font-style:italic;letter-spacing:-0.146px;">Gesprächsnotiz</span><span class="t" style="left:82.40px;top:192.36px;font-size:9.50px;color:#555;font-style:italic;letter-spacing:0.014px;">für Herrn/Frau:</span><div style="left:148px;top:202px;width:20px;height:1px;background:#9a9a9a;"></div><div style="left:169px;top:202px;width:31px;height:1px;background:#9a9a9a;"></div><div style="left:201px;top:202px;width:34px;height:1px;background:#9a9a9a;"></div><div style="left:237px;top:202px;width:31px;height:1px;background:#9a9a9a;"></div><div style="left:270px;top:202px;width:32px;height:1px;background:#9a9a9a;"></div><div style="left:303px;top:202px;width:31px;height:1px;background:#9a9a9a;"></div><div style="left:336px;top:202px;width:31px;height:1px;background:#9a9a9a;"></div><div style="left:369px;top:202px;width:7px;height:1px;background:#9a9a9a;"></div><span class="t" style="left:82.50px;top:214.93px;font-size:10.60px;color:#6c6c6c;letter-spacing:-0.055px;">Herr/Frau</span><span class="t" style="left:82.50px;top:232.53px;font-size:10.60px;color:#6c6c6c;letter-spacing:-0.038px;">in Firma</span><span class="t" style="left:82.50px;top:270.53px;font-size:10.60px;color:#6c6c6c;letter-spacing:0.057px;">Telefon-Nr.:</span><div style="left:135px;top:225.5px;width:251px;height:1px;background:#9a9a9a;"></div><div style="left:135px;top:245.5px;width:251px;height:1px;background:#9a9a9a;"></div><div style="left:135px;top:262.5px;width:251px;height:1px;background:#777;"></div><div style="left:147.5px;top:283px;width:238.5px;height:1px;background:#9a9a9a;"></div><div style="left:89.2px;top:295.2px;width:13.4px;height:13px;border:1px solid #969696;box-sizing:border-box;background:#fdfdfd;"></div><span class="t" style="left:104.90px;top:299.76px;font-size:8.20px;color:#6c6c6c;letter-spacing:0.222px;">hat angerufen</span><div style="left:89.2px;top:310.8px;width:13.4px;height:13px;border:1px solid #969696;box-sizing:border-box;background:#fdfdfd;"></div><span class="t" style="left:104.90px;top:314.66px;font-size:8.20px;color:#6c6c6c;letter-spacing:0.235px;">ist hier gewesen</span><div style="left:89.2px;top:326.2px;width:13.4px;height:13px;border:1px solid #969696;box-sizing:border-box;background:#fdfdfd;"></div><span class="t" style="left:104.90px;top:329.76px;font-size:8.20px;color:#6c6c6c;letter-spacing:0.264px;">möchte Sie treffen</span><div style="left:192.3px;top:295.2px;width:13.4px;height:13px;border:1px solid #969696;box-sizing:border-box;background:#fdfdfd;"></div><span class="t" style="left:207.80px;top:299.76px;font-size:8.20px;color:#6c6c6c;letter-spacing:0.298px;">erbittet Rückruf</span><div style="left:192.3px;top:310.8px;width:13.4px;height:13px;border:1px solid #969696;box-sizing:border-box;background:#fdfdfd;"></div><span class="t" style="left:207.80px;top:314.66px;font-size:8.20px;color:#6c6c6c;letter-spacing:0.222px;">ruft wieder an</span><div style="left:192.3px;top:326.2px;width:13.4px;height:13px;border:1px solid #969696;box-sizing:border-box;background:#fdfdfd;"></div><span class="t" style="left:207.80px;top:329.76px;font-size:8.20px;color:#6c6c6c;letter-spacing:0.298px;">wünscht Besuch</span><div style="left:288.3px;top:295.2px;width:13.4px;height:13px;border:1px solid #969696;box-sizing:border-box;background:#fdfdfd;"></div><span class="t" style="left:303.30px;top:299.76px;font-size:8.20px;color:#6c6c6c;letter-spacing:0.219px;">Anfrage</span><div style="left:288.3px;top:310.8px;width:13.4px;height:13px;border:1px solid #969696;box-sizing:border-box;background:#fdfdfd;"></div><span class="t" style="left:303.30px;top:314.66px;font-size:8.20px;color:#6c6c6c;letter-spacing:0.273px;">Rückfrage</span><div style="left:288.3px;top:326.2px;width:13.4px;height:13px;border:1px solid #969696;box-sizing:border-box;background:#fdfdfd;"></div><div style="left:303.5px;top:338px;width:7.4px;height:1px;background:#8a8a8a;"></div><div style="left:312.2px;top:338px;width:7.4px;height:1px;background:#8a8a8a;"></div><div style="left:320.9px;top:338px;width:7.4px;height:1px;background:#8a8a8a;"></div><div style="left:329.6px;top:338px;width:7.4px;height:1px;background:#8a8a8a;"></div><div style="left:338.3px;top:338px;width:7.4px;height:1px;background:#8a8a8a;"></div><div style="left:347px;top:338px;width:7.4px;height:1px;background:#8a8a8a;"></div><div style="left:355.7px;top:338px;width:7.4px;height:1px;background:#8a8a8a;"></div><div style="left:364.4px;top:338px;width:7.4px;height:1px;background:#8a8a8a;"></div><div style="left:373.1px;top:338px;width:7.4px;height:1px;background:#8a8a8a;"></div><div style="left:77px;top:346px;width:314.5px;height:1px;background:#9e9e9e;"></div><div style="left:77px;top:371px;width:314.5px;height:1px;background:#9e9e9e;"></div><div style="left:77px;top:396px;width:314.5px;height:1px;background:#9e9e9e;"></div><div style="left:77px;top:421px;width:314.5px;height:1px;background:#9e9e9e;"></div><div style="left:77px;top:446px;width:314.5px;height:1px;background:#9e9e9e;"></div><div style="left:77px;top:471px;width:314.5px;height:1px;background:#9e9e9e;"></div><div style="left:77px;top:496.5px;width:314.5px;height:1px;background:#9e9e9e;"></div><div style="left:433.2px;top:158px;width:315px;height:50.5px;border:1px solid #848484;box-sizing:border-box;"></div><span class="t" style="left:439.40px;top:160.53px;font-size:17.80px;color:#111;font-weight:bold;font-style:italic;letter-spacing:-0.146px;">Gesprächsnotiz</span><span class="t" style="left:438.60px;top:192.36px;font-size:9.50px;color:#555;font-style:italic;letter-spacing:0.014px;">für Herrn/Frau:</span><div style="left:504.2px;top:202px;width:20px;height:1px;background:#9a9a9a;"></div><div style="left:525.2px;top:202px;width:31px;height:1px;background:#9a9a9a;"></div><div style="left:557.2px;top:202px;width:34px;height:1px;background:#9a9a9a;"></div><div style="left:593.2px;top:202px;width:31px;height:1px;background:#9a9a9a;"></div><div style="left:626.2px;top:202px;width:32px;height:1px;background:#9a9a9a;"></div><div style="left:659.2px;top:202px;width:31px;height:1px;background:#9a9a9a;"></div><div style="left:692.2px;top:202px;width:31px;height:1px;background:#9a9a9a;"></div><div style="left:725.2px;top:202px;width:7px;height:1px;background:#9a9a9a;"></div><span class="t" style="left:438.70px;top:214.93px;font-size:10.60px;color:#6c6c6c;letter-spacing:-0.055px;">Herr/Frau</span><span class="t" style="left:438.70px;top:232.53px;font-size:10.60px;color:#6c6c6c;letter-spacing:-0.038px;">in Firma</span><span class="t" style="left:438.70px;top:270.53px;font-size:10.60px;color:#6c6c6c;letter-spacing:0.057px;">Telefon-Nr.:</span><div style="left:491.2px;top:225.5px;width:251px;height:1px;background:#9a9a9a;"></div><div style="left:491.2px;top:245.5px;width:251px;height:1px;background:#9a9a9a;"></div><div style="left:491.2px;top:262.5px;width:251px;height:1px;background:#777;"></div><div style="left:503.7px;top:283px;width:238.5px;height:1px;background:#9a9a9a;"></div><div style="left:445.4px;top:295.2px;width:13.4px;height:13px;border:1px solid #969696;box-sizing:border-box;background:#fdfdfd;"></div><span class="t" style="left:461.10px;top:299.76px;font-size:8.20px;color:#6c6c6c;letter-spacing:0.222px;">hat angerufen</span><div style="left:445.4px;top:310.8px;width:13.4px;height:13px;border:1px solid #969696;box-sizing:border-box;background:#fdfdfd;"></div><span class="t" style="left:461.10px;top:314.66px;font-size:8.20px;color:#6c6c6c;letter-spacing:0.235px;">ist hier gewesen</span><div style="left:445.4px;top:326.2px;width:13.4px;height:13px;border:1px solid #969696;box-sizing:border-box;background:#fdfdfd;"></div><span class="t" style="left:461.10px;top:329.76px;font-size:8.20px;color:#6c6c6c;letter-spacing:0.264px;">möchte Sie treffen</span><div style="left:548.5px;top:295.2px;width:13.4px;height:13px;border:1px solid #969696;box-sizing:border-box;background:#fdfdfd;"></div><span class="t" style="left:564.00px;top:299.76px;font-size:8.20px;color:#6c6c6c;letter-spacing:0.298px;">erbittet Rückruf</span><div style="left:548.5px;top:310.8px;width:13.4px;height:13px;border:1px solid #969696;box-sizing:border-box;background:#fdfdfd;"></div><span class="t" style="left:564.00px;top:314.66px;font-size:8.20px;color:#6c6c6c;letter-spacing:0.222px;">ruft wieder an</span><div style="left:548.5px;top:326.2px;width:13.4px;height:13px;border:1px solid #969696;box-sizing:border-box;background:#fdfdfd;"></div><span class="t" style="left:564.00px;top:329.76px;font-size:8.20px;color:#6c6c6c;letter-spacing:0.298px;">wünscht Besuch</span><div style="left:644.5px;top:295.2px;width:13.4px;height:13px;border:1px solid #969696;box-sizing:border-box;background:#fdfdfd;"></div><span class="t" style="left:659.50px;top:299.76px;font-size:8.20px;color:#6c6c6c;letter-spacing:0.219px;">Anfrage</span><div style="left:644.5px;top:310.8px;width:13.4px;height:13px;border:1px solid #969696;box-sizing:border-box;background:#fdfdfd;"></div><span class="t" style="left:659.50px;top:314.66px;font-size:8.20px;color:#6c6c6c;letter-spacing:0.273px;">Rückfrage</span><div style="left:644.5px;top:326.2px;width:13.4px;height:13px;border:1px solid #969696;box-sizing:border-box;background:#fdfdfd;"></div><div style="left:659.7px;top:338px;width:7.4px;height:1px;background:#8a8a8a;"></div><div style="left:668.4px;top:338px;width:7.4px;height:1px;background:#8a8a8a;"></div><div style="left:677.1px;top:338px;width:7.4px;height:1px;background:#8a8a8a;"></div><div style="left:685.8px;top:338px;width:7.4px;height:1px;background:#8a8a8a;"></div><div style="left:694.5px;top:338px;width:7.4px;height:1px;background:#8a8a8a;"></div><div style="left:703.2px;top:338px;width:7.4px;height:1px;background:#8a8a8a;"></div><div style="left:711.9px;top:338px;width:7.4px;height:1px;background:#8a8a8a;"></div><div style="left:720.6px;top:338px;width:7.4px;height:1px;background:#8a8a8a;"></div><div style="left:729.3px;top:338px;width:7.4px;height:1px;background:#8a8a8a;"></div><div style="left:433.2px;top:346px;width:314.5px;height:1px;background:#9e9e9e;"></div><div style="left:433.2px;top:371px;width:314.5px;height:1px;background:#9e9e9e;"></div><div style="left:433.2px;top:396px;width:314.5px;height:1px;background:#9e9e9e;"></div><div style="left:433.2px;top:421px;width:314.5px;height:1px;background:#9e9e9e;"></div><div style="left:433.2px;top:446px;width:314.5px;height:1px;background:#9e9e9e;"></div><div style="left:433.2px;top:471px;width:314.5px;height:1px;background:#9e9e9e;"></div><div style="left:433.2px;top:496.5px;width:314.5px;height:1px;background:#9e9e9e;"></div></div><div style="left:615px;top:79px;width:1px;height:423px;background:#fff;"></div><div style="left:616px;top:79px;width:8px;height:423px;background:#f5f4ee;"></div><div style="left:616px;top:79px;width:8px;height:10px;background:linear-gradient(90deg,#cddcfb,#b7cdf9);border-radius:1px;"></div><div style="left:616px;top:90px;width:8px;height:257px;background:linear-gradient(90deg,#cfdcfa,#bdd0f8 60%,#b4c8f5);border-radius:1px;"></div><div style="left:616px;top:457px;width:8px;height:10px;background:linear-gradient(90deg,#cddcfb,#b7cdf9);border-radius:1px;"></div><svg style="left:616px;top:79px" width="8" height="10" viewBox="0 0 8 10"><path d="M1.6 6.2 L4 3.6 L6.4 6.2" fill="none" stroke="#3f4f7a" stroke-width="1.3"/></svg><svg style="left:616px;top:457px" width="8" height="10" viewBox="0 0 8 10"><path d="M1.6 3.8 L4 6.4 L6.4 3.8" fill="none" stroke="#3f4f7a" stroke-width="1.3"/></svg><div style="left:618px;top:216px;width:4px;height:6px;border:1px solid #dfe9fd;box-sizing:border-box;background:#c9d8fa;"></div><div style="left:616px;top:469px;width:10px;height:9.5px;border:1px solid #6b7489;border-radius:2px;background:#fafaf6;box-sizing:border-box;"></div><div style="left:616px;top:480.5px;width:10px;height:9.5px;border:1px solid #6b7489;border-radius:2px;background:#fafaf6;box-sizing:border-box;"></div><div style="left:616px;top:491.5px;width:10px;height:9.5px;border:1px solid #6b7489;border-radius:2px;background:#fafaf6;box-sizing:border-box;"></div><svg style="left:616px;top:469px" width="8" height="10" viewBox="0 0 8 10"><path d="M2 4.6 L4.3 2 L6.6 4.6Z M2 7.8 L4.3 5.2 L6.6 7.8Z" fill="#222"/></svg><svg style="left:616px;top:491.5px" width="8" height="10" viewBox="0 0 8 10"><path d="M2 2 L4.3 4.6 L6.6 2Z M2 5.2 L4.3 7.8 L6.6 5.2Z" fill="#222"/></svg><div style="left:618.2px;top:482.4px;width:5.2px;height:5.4px;border-radius:3px;background:radial-gradient(circle at 35% 35%,#a9bcff,#2f49d6 65%);"></div><div style="left:6px;top:502px;width:609px;height:12px;background:#f5f4ee;"></div><div style="left:615px;top:502px;width:9px;height:12px;background:#ece9d8;"></div><div style="left:6px;top:502.4px;width:8.5px;height:10.2px;background:linear-gradient(#cddcfb,#b7cdf9);border-radius:1px;"></div><div style="left:16px;top:502.4px;width:438px;height:10.2px;background:linear-gradient(#cfdcfa,#c1d3f9 55%,#b4c8f5);border-radius:1px;"></div><div style="left:604px;top:502.4px;width:10px;height:10.2px;background:linear-gradient(#cddcfb,#b7cdf9);border-radius:1px;"></div><svg style="left:6px;top:502px" width="9" height="11" viewBox="0 0 9 11"><path d="M5.6 2.8 L3 5.5 L5.6 8.2" fill="none" stroke="#3f4f7a" stroke-width="1.3"/></svg><svg style="left:604px;top:502px" width="10" height="11" viewBox="0 0 10 11"><path d="M3.8 2.8 L6.4 5.5 L3.8 8.2" fill="none" stroke="#3f4f7a" stroke-width="1.3"/></svg><div style="left:232px;top:505px;width:5px;height:5px;border:1px solid #dfe9fd;box-sizing:border-box;background:#c9d8fa;"></div><div style="left:6px;top:514px;width:618px;height:10px;background:#ece9d8;"></div><div style="left:6px;top:514px;width:618px;height:1px;background:#f6f5ee;"></div><div style="left:7px;top:516.5px;width:138.5px;height:9.5px;border:1px solid #aaa694;border-right-color:#fff;box-sizing:border-box;"></div><div style="left:148px;top:516.5px;width:154.5px;height:9.5px;border:1px solid #aaa694;border-right-color:#fff;box-sizing:border-box;"></div><div style="left:305.5px;top:516.5px;width:29.5px;height:9.5px;border:1px solid #aaa694;border-right-color:#fff;box-sizing:border-box;"></div><div style="left:340px;top:516.5px;width:27.5px;height:9.5px;border:1px solid #aaa694;border-right-color:#fff;box-sizing:border-box;"></div><div style="left:371.5px;top:516.5px;width:25px;height:9.5px;border:1px solid #aaa694;border-right-color:#fff;box-sizing:border-box;"></div><div style="left:400.5px;top:516.5px;width:11.5px;height:9.5px;border:1px solid #aaa694;border-right-color:#fff;box-sizing:border-box;"></div><div style="left:416px;top:516.5px;width:16.5px;height:9.5px;border:1px solid #aaa694;border-right-color:#fff;box-sizing:border-box;"></div><div style="left:436px;top:516.5px;width:192px;height:9.5px;border:1px solid #aaa694;border-right-color:#fff;box-sizing:border-box;"></div><span class="t" style="left:9.50px;top:518.07px;font-size:8.30px;color:#606060;transform-origin:0 0;transform:scaleX(0.8562);">Seite 1 / 1</span><span class="t" style="left:152.00px;top:518.07px;font-size:8.30px;color:#606060;transform-origin:0 0;transform:scaleX(0.8015);">Standard</span><span class="t" style="left:312.50px;top:518.07px;font-size:8.30px;color:#606060;transform-origin:0 0;transform:scaleX(0.8241);">100%</span><span class="t" style="left:344.50px;top:518.07px;font-size:8.30px;color:#606060;transform-origin:0 0;transform:scaleX(0.7492);">EINFG</span><span class="t" style="left:378.50px;top:518.07px;font-size:8.30px;color:#606060;transform-origin:0 0;transform:scaleX(0.7526);">STD</span><div style="left:0px;top:524px;width:630px;height:6px;background:#ff6600;"></div><div style="left:624px;top:0px;width:6px;height:530px;background:#ff6600;"></div><div style="left:0px;top:0px;width:630px;height:6px;background:#ff6600;"></div><div style="left:0px;top:0px;width:6px;height:530px;background:#ff6600;"></div></div>
</body></html>
